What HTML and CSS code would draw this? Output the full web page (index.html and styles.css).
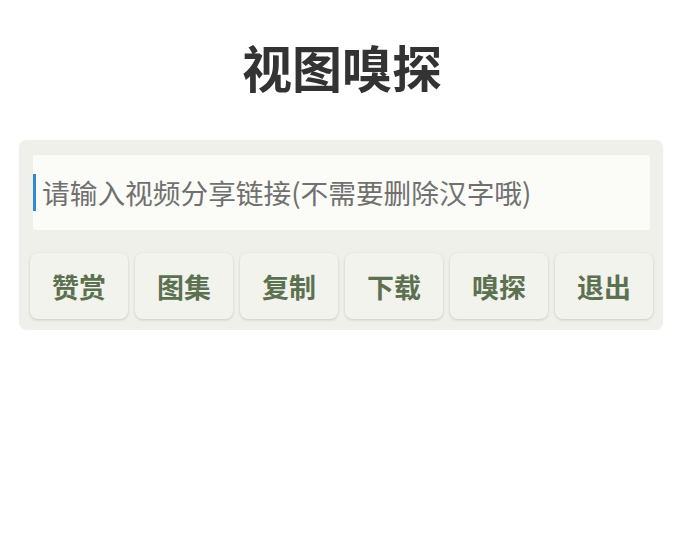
FILE: index.html
```html
<!DOCTYPE html>
<html lang="zh-CN">
<head>
<meta charset="utf-8">
<title>视图嗅探</title>
<link rel="stylesheet" href="styles.css">
</head>
<body>
<h1 class="title">视图嗅探</h1>
<div class="card">
  <div class="input">
    <span class="caret"></span>
    <span class="placeholder">请输入视频分享链接(不需要删除汉字哦)</span>
  </div>
  <div class="buttons">
    <button class="btn">赞赏</button>
    <button class="btn">图集</button>
    <button class="btn">复制</button>
    <button class="btn">下载</button>
    <button class="btn">嗅探</button>
    <button class="btn">退出</button>
  </div>
</div>
</body>
</html>
```
FILE: styles.css
```css
html, body {
  margin: 0;
  padding: 0;
  background: #ffffff;
}
body {
  font-family: "Noto Sans CJK SC", "Noto Sans", sans-serif;
  width: 684px;
}
.title {
  margin: 41px 0 0 0;
  height: 50px;
  font-size: 50px;
  line-height: 50px;
  font-weight: 700;
  color: #333333;
  text-align: center;
}
.card {
  margin: 49px 0 0 19px;
  width: 644px;
  box-sizing: border-box;
  padding: 15px 10px 11px 11px;
  background: #f0f0ea;
  border-radius: 8px;
  box-shadow: 0 0 2px rgba(0, 0, 0, 0.06);
}
.input {
  margin-left: 3px;
  width: 617px;
  height: 75px;
  background: #fbfbf7;
  border-radius: 2px;
  display: flex;
  align-items: center;
}
.caret {
  width: 3px;
  height: 37px;
  background: #2f8ad6;
  flex: none;
}
.placeholder {
  margin-left: 6px;
  font-size: 27.7px;
  line-height: 37px;
  color: #707070;
  white-space: nowrap;
}
.buttons {
  margin-top: 23px;
  display: flex;
  gap: 7px;
}
.btn {
  width: 98px;
  height: 66px;
  padding: 0;
  border: none;
  border-radius: 8px;
  background: #f3f3ee;
  box-shadow: 0 1px 3px rgba(0, 0, 0, 0.16);
  font-family: "Noto Sans CJK SC", "Noto Sans", sans-serif;
  font-size: 27px;
  font-weight: 700;
  color: #5b7150;
}
```
